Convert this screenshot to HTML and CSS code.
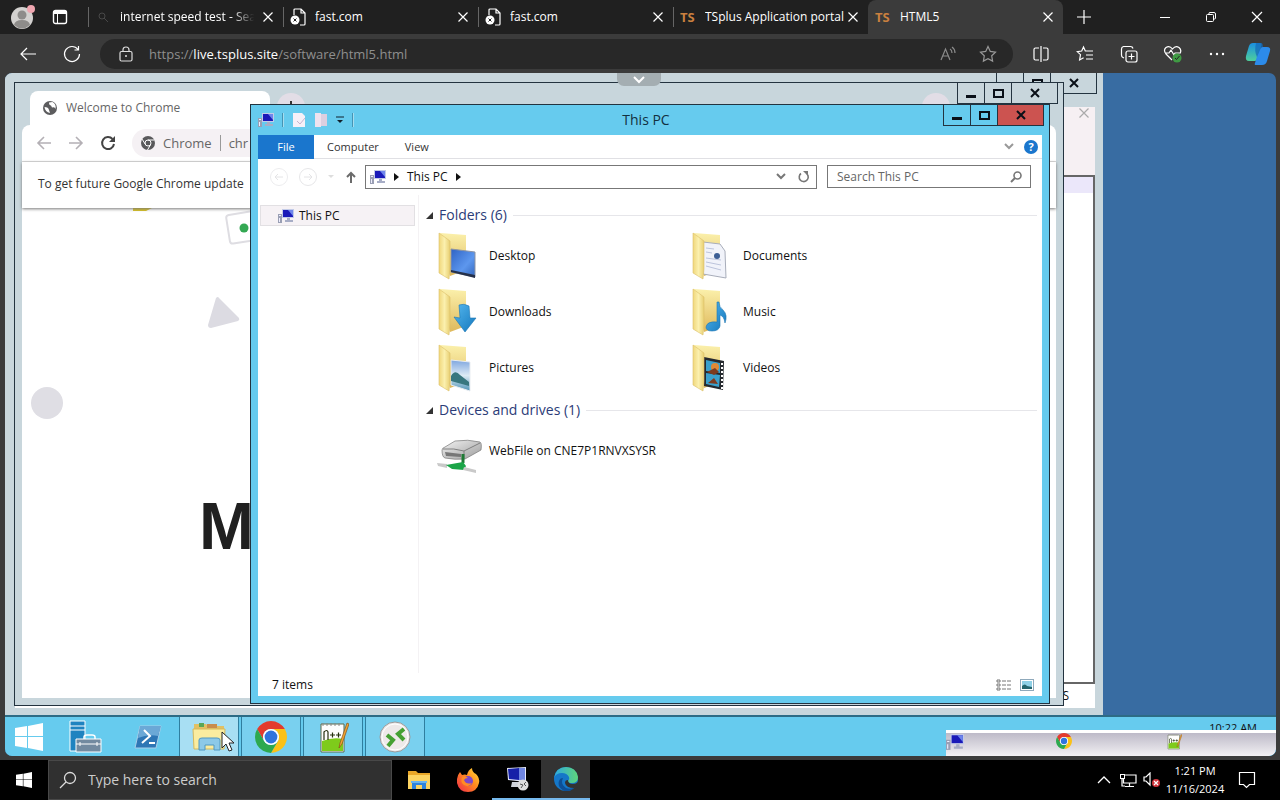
FILE: index.html
```
<!DOCTYPE html>
<html lang="en">
  <head>
    <meta charset="UTF-8" />
    <title>HTML5</title>
    <link rel="stylesheet" href="styles.css">
  </head>
  <body>
    <!-- shared icons -->
    <svg class="defs" aria-hidden="true">
      <defs>
        <linearGradient id="gFlap" x1="0" y1="0" x2="1" y2="0"><stop offset="0" stop-color="#f0d77b"/><stop offset=".5" stop-color="#fbf0ae"/><stop offset="1" stop-color="#e8cf72"/></linearGradient>
        <linearGradient id="gBack" x1="0" y1="0" x2="0" y2="1"><stop offset="0" stop-color="#fbf0ab"/><stop offset="1" stop-color="#dfb95c"/></linearGradient>
        <linearGradient id="gBlue" x1="0" y1="0" x2="1" y2="1"><stop offset="0" stop-color="#2f63c4"/><stop offset=".6" stop-color="#5d97ee"/><stop offset="1" stop-color="#3467bd"/></linearGradient>
        <linearGradient id="gArrow" x1="0" y1="0" x2="1" y2="1"><stop offset="0" stop-color="#55b7ee"/><stop offset="1" stop-color="#1377bd"/></linearGradient>
        <linearGradient id="gSky" x1="0" y1="0" x2="0" y2="1"><stop offset="0" stop-color="#7fa6df"/><stop offset=".5" stop-color="#dcebf5"/><stop offset="1" stop-color="#4f93b5"/></linearGradient>
        <linearGradient id="gGrey" x1="0" y1="0" x2="1" y2="1"><stop offset="0" stop-color="#f4f4f4"/><stop offset="1" stop-color="#9b9b9b"/></linearGradient>
        <linearGradient id="gEdge" x1="0" y1="0" x2="1" y2="0"><stop offset="0" stop-color="#2da8e0"/><stop offset="1" stop-color="#5fd67a"/></linearGradient>
        <linearGradient id="gFox" x1="1" y1="0" x2="0" y2="1"><stop offset="0" stop-color="#ffe03a"/><stop offset=".45" stop-color="#ff8a1f"/><stop offset="1" stop-color="#f0274c"/></linearGradient>
        <linearGradient id="gCop" x1="0" y1="0" x2="0" y2="1"><stop offset="0" stop-color="#1b8fe0"/><stop offset="1" stop-color="#4fd09b"/></linearGradient>
      </defs>
      <symbol id="x" viewBox="0 0 16 16"><path d="M3.500 3.500l9 9M12.500 3.500l-9 9" fill="none" stroke="currentColor" stroke-width="1.200"/></symbol>
      <symbol id="folder" viewBox="0 0 48 48">
        <path d="M3 1L29 3V38L13 44z" fill="url(#gBack)"/>
      </symbol>
      <symbol id="flap" viewBox="0 0 48 48">
        <path d="M2 1l11 8v28l-1 10-10-6z" fill="url(#gFlap)" stroke="#dcc069" stroke-width=".6"/>
      </symbol>
      <symbol id="pc" viewBox="0 0 16 16">
        <path d="M4 1h12v9H4z" fill="#c3cbe8"/><path d="M5 2h10v7H5z" fill="#1a1ab8"/><path d="M10 2h5v6z" fill="#6f86ec"/>
        <path d="M9 10h3v2h3v2H7v-2h2z" fill="#a7adc6"/><path d="M0 6h4v9H0z" fill="#9a9fb4"/><path d="M1 7h2v1H1zM1 10h1v4H1z" fill="#eef"/>
      </symbol>
      <symbol id="chrome" viewBox="4 4 40 40">
        <path fill="#e33b2e" d="M6.68 14A20 20 0 0 1 41.32 14H24A10 10 0 0 0 15.34 29z"/>
        <path fill="#fbc116" d="M41.32 14A20 20 0 0 1 24 44L32.66 29A10 10 0 0 0 24 14z"/>
        <path fill="#2da94f" d="M24 44A20 20 0 0 1 6.68 14L15.34 29A10 10 0 0 0 32.66 29z"/>
        <circle cx="24" cy="24" r="10" fill="#fff"/><circle cx="24" cy="24" r="8" fill="#2f74dd"/>
      </symbol>
      <symbol id="npp" viewBox="0 0 32 32">
        <path d="M4 3h23v28H4z" fill="#fdfdfd" stroke="#5d6a4a"/><path d="M5 20q11-4 21-2v12H5z" fill="#7ecb1b"/>
        <path d="M6 2v3M10 2v3M14 2v3M18 2v3M22 2v3" stroke="#888"/>
        <path d="M7 19v-8q3-3 4 0v8M13 14h5M15.500 11.500v5M19 14h5M21.500 11.500v5" fill="none" stroke="#25300e" stroke-width="1.200"/>
        <path d="M22 27l1-5L30 2l2 1-7 20z" fill="#f1a431" stroke="#865018" stroke-width=".7"/>
      </symbol>
      <symbol id="explorer" viewBox="0 0 24 24">
        <path d="M1 3h8l2 2h12v4H1z" fill="#e9a728"/><path d="M1 7h22v14H1z" fill="#fcd462"/>
        <path d="M5 21v-6q0-2 2-2h10q2 0 2 2v6h-4v-4H9v4z" fill="#2f83dc"/><path d="M4 13h16v2H4z" fill="#68b3ef"/>
      </symbol>
      <symbol id="winlogo" viewBox="0 0 28 28"><path d="M0 5l12-2v10H0zM13 3l15-3v13H13zM0 14h12v11L0 23zM13 14h15v14l-15-3z" fill="#fff"/></symbol>
      <symbol id="badpage" viewBox="0 0 16 18">
        <path d="M4 7V2q0-1 1-1h6l4 4v11q0 1-1 1h-4M11 1v4h4" fill="none" stroke="#fff" stroke-width="1.200"/>
        <circle cx="5" cy="12" r="4.500" fill="#fff"/><path d="M3.500 10.500l3 3M6.500 10.500l-3 3" stroke="#222"/>
      </symbol>
    </svg>

    <!-- browser tabs -->
    <header class="tabstrip">
      <button class="avatar" aria-label="Profile">
        <svg width="26" height="26" viewBox="0 0 26 26"><circle cx="12" cy="14" r="11" fill="#d3d1cf"/><circle cx="12" cy="11" r="4.500" fill="#8e8c8a"/><path d="M4 21q1-5 8-5t8 5q-8 7-16 0z" fill="#8e8c8a"/><circle cx="21" cy="5" r="4" fill="#f0a6b0"/></svg>
      </button>
      <button class="workspaces" aria-label="Workspaces">
        <svg width="16" height="16" viewBox="0 0 16 16"><rect x="1.500" y="1.500" width="13" height="13" rx="2" fill="none" stroke="#fff" stroke-width="1.400"/><path d="M2 2h12v3H2zM5 5h1v9H5z" fill="#fff"/></svg>
      </button>
      <nav class="tabs">
        <div class="tab">
          <svg width="16" height="16" viewBox="0 0 16 16"><circle cx="7" cy="7" r="3" fill="none" stroke="#484848"/><path d="M9 9l4 4" stroke="#484848"/></svg>
          <a class="tab-title fade" href="#">internet speed test - Sear</a>
          <button aria-label="Close tab"><svg width="16" height="16"><use href="#x"/></svg></button>
        </div>
        <div class="tab">
          <svg width="16" height="18"><use href="#badpage"/></svg>
          <a class="tab-title" href="#">fast.com</a>
          <button aria-label="Close tab"><svg width="16" height="16"><use href="#x"/></svg></button>
        </div>
        <div class="tab">
          <svg width="16" height="18"><use href="#badpage"/></svg>
          <a class="tab-title" href="#">fast.com</a>
          <button aria-label="Close tab"><svg width="16" height="16"><use href="#x"/></svg></button>
        </div>
        <div class="tab">
          <span class="ts">TS</span>
          <a class="tab-title" href="#">TSplus Application portal</a>
          <button aria-label="Close tab"><svg width="16" height="16"><use href="#x"/></svg></button>
        </div>
        <div class="tab active">
          <span class="ts">TS</span>
          <a class="tab-title" href="#">HTML5</a>
          <button aria-label="Close tab"><svg width="16" height="16"><use href="#x"/></svg></button>
        </div>
      </nav>
      <button class="new-tab" aria-label="New tab"><svg width="16" height="16" viewBox="0 0 16 16"><path d="M8 1v14M1 8h14" stroke="#fff" stroke-width="1.200"/></svg></button>
      <div class="win-controls">
        <button aria-label="Minimize"><svg width="12" height="12"><path d="M1 6.500h10" stroke="#fff"/></svg></button>
        <button aria-label="Restore"><svg width="12" height="12" viewBox="0 0 12 12"><rect x="1.500" y="3.500" width="7" height="7" rx="1" fill="none" stroke="#fff"/><path d="M4 3V2q0-.500 1-.500h4q1.500 0 1.500 1.500v4q0 1-1 1H9" fill="none" stroke="#fff"/></svg></button>
        <button aria-label="Close"><svg width="12" height="12"><path d="M1 1l10 10M11 1L1 11" stroke="#fff" stroke-width="1.200"/></svg></button>
      </div>
    </header>

    <div class="toolbar">
      <button aria-label="Back"><svg width="18" height="16" viewBox="0 0 18 16"><path d="M17 8H2M8 2L2 8l6 6" fill="none" stroke="#fff" stroke-width="1.200"/></svg></button>
      <button aria-label="Refresh"><svg width="18" height="18" viewBox="0 0 18 18"><path d="M15 4.500A7.500 7.500 0 1 0 16.500 9M15.500 1v4h-4" fill="none" stroke="#fff" stroke-width="1.200"/></svg></button>
      <div class="urlbar">
        <svg width="14" height="16" viewBox="0 0 14 16"><rect x="1" y="5.500" width="12" height="9.500" rx="1.500" fill="none" stroke="#ddd" stroke-width="1.200"/><path d="M4 5V4q0-3 3-3t3 3v1" fill="none" stroke="#ddd" stroke-width="1.200"/><circle cx="7" cy="10" r="1" fill="#ddd"/></svg>
        <div class="url" role="textbox" contenteditable="true" aria-label="Address">https://<b>live.tsplus.site</b>/software/html5.html</div>
        <button aria-label="Read aloud"><svg width="18" height="16" viewBox="0 0 18 16"><path d="M2 14L6.500 3 11 14M3.500 10h6M11 3q2 1 2 4M13 1q3 2 3 6" fill="none" stroke="#8b8b8b" stroke-width="1.200"/></svg></button>
        <button aria-label="Add to favorites"><svg width="18" height="18" viewBox="0 0 18 18"><path d="M9 1.500l2.300 4.900 5.200.700-3.800 3.700.900 5.300L9 13.600l-4.600 2.500.900-5.300L1.500 7.100l5.200-.700z" fill="none" stroke="#999" stroke-width="1.200"/></svg></button>
      </div>
      <button aria-label="Split screen"><svg width="18" height="18" viewBox="0 0 18 18"><path d="M7 3H3.500Q2 3 2 4.500v9Q2 15 3.500 15H7M11 3h3.500Q16 3 16 4.500v9q0 1.500-1.500 1.500H11M9 1v16" fill="none" stroke="#fff" stroke-width="1.200"/></svg></button>
      <button aria-label="Favorites"><svg width="18" height="18" viewBox="0 0 18 18"><path d="M11 6l-1.700 0L7.500 2 5.700 6l-4.500.600 3.300 3-.900 5.400 4-2.200M11 6h6M10 10h7M10 14h7" fill="none" stroke="#fff" stroke-width="1.200"/></svg></button>
      <button aria-label="Collections"><svg width="18" height="18" viewBox="0 0 18 18"><rect x="6" y="6" width="11" height="11" rx="2" fill="none" stroke="#fff" stroke-width="1.200"/><path d="M4 13l-1-.500Q1.500 12 1.500 10V4q0-2 2-2.500h7q2 0 2.500 2M11.500 8.500v6M8.500 11.500h6" fill="none" stroke="#fff" stroke-width="1.200"/></svg></button>
      <button aria-label="Browser essentials"><svg width="20" height="18" viewBox="0 0 20 18"><path d="M9 15L3 9Q0 5 3 2.500 6.500 0 9.500 4 12.500 0 16 2.500q3 2.500 1 6M2 8h4l2-3 3 5 1-2h5" fill="none" stroke="#fff" stroke-width="1.200"/><circle cx="14" cy="13" r="4.500" fill="#3f9a43"/><path d="M12 13l1.500 1.500L16.500 11" fill="none" stroke="#222"/></svg></button>
      <button aria-label="More"><svg width="16" height="4"><circle cx="2" cy="2" r="1.200" fill="#fff"/><circle cx="8" cy="2" r="1.200" fill="#fff"/><circle cx="14" cy="2" r="1.200" fill="#fff"/></svg></button>
      <button class="copilot" aria-label="Copilot"><svg width="26" height="26" viewBox="0 0 26 26"><path d="M8 2h7q2 0 1.500 2l-3 12q-1 4-4 4H4q-4 0-3-5L4 5q1-3 4-3z" fill="url(#gCop)"/><path d="M17 6h5q4 0 3 4l-3 10q-1 4-5 4h-6q-2 0-1-2l4-13q1-3 3-3z" fill="#2c8bea"/><path d="M11 2h5q2 0 2 4-2 0-3 3l-3 7q-3-6-1-14z" fill="#1267b8" opacity=".7"/></svg></button>
    </div>

    <!-- remote session -->
    <main class="remote">
      <div class="desktop">
        <section class="window notepad">
          <div class="caption">
            <button aria-label="Minimize">&nbsp;</button>
            <button aria-label="Maximize"><svg width="11" height="9"><rect x="1" y="1" width="9" height="7" fill="none" stroke="#0a1018" stroke-width="2"/></svg></button>
            <button class="wide" aria-label="Close"><svg width="10" height="10"><path d="M1 1l8 8M9 1L1 9" stroke="#0a1018" stroke-width="2"/></svg></button>
          </div>
          <div class="notepad-body">
            <div class="notepad-bar"><button aria-label="Close document"><svg width="16" height="16"><use href="#x"/></svg></button></div>
            <div class="notepad-text"><div class="current-line"></div></div>
            <div class="notepad-status"><span>INS</span></div>
          </div>
        </section>

        <section class="window chrome">
          <div class="caption">
            <button aria-label="Minimize"><svg width="10" height="9"><path d="M0 7.500h10" stroke="#0a1018" stroke-width="3"/></svg></button>
            <button aria-label="Maximize"><svg width="11" height="9"><rect x="1" y="1" width="9" height="7" fill="none" stroke="#0a1018" stroke-width="2"/></svg></button>
            <button class="wide" aria-label="Close"><svg width="10" height="10"><path d="M1 1l8 8M9 1L1 9" stroke="#0a1018" stroke-width="2"/></svg></button>
          </div>
          <div class="chrome-tabs">
            <div class="chrome-tab">
              <svg width="14" height="14" viewBox="0 0 14 14"><circle cx="7" cy="7" r="7" fill="#5c5c5e"/><path d="M1.500 6q4 0 4.500 3l1 3Q2 11 1.500 6zM6 1.500q0 3 2 3l1 2q3-1 3.500 1.500 1-5-3-7z" fill="#fff"/></svg>
              <a href="#">Welcome to Chrome</a>
            </div>
            <button class="chrome-new" aria-label="New tab"><svg width="12" height="12"><path d="M6 0v12M0 6h12" stroke="#333" stroke-width="2"/></svg></button>
            <span class="chrome-account"></span>
          </div>
          <div class="chrome-bar">
            <button aria-label="Back"><svg width="16" height="14"><path d="M15 7H2M8 1L2 7l6 6" fill="none" stroke="#b4b0b5" stroke-width="1.600"/></svg></button>
            <button aria-label="Forward"><svg width="16" height="14"><path d="M1 7h13M8 1l6 6-6 6" fill="none" stroke="#b4b0b5" stroke-width="1.600"/></svg></button>
            <button aria-label="Reload"><svg width="16" height="16" viewBox="0 0 16 16"><path d="M12.500 4A6 6 0 1 0 14 9" fill="none" stroke="#444" stroke-width="2"/><path d="M15 1v6H9z" fill="#444"/></svg></button>
            <div class="chrome-url">
              <svg width="14" height="14" viewBox="0 0 14 14"><circle cx="7" cy="7" r="7" fill="#59595b"/><circle cx="7" cy="7" r="3" fill="#59595b" stroke="#fff"/><path d="M7 4h6.500M4.400 8.500L1.200 3.200M9.600 8.500L6.500 14" stroke="#fff"/></svg>
              <span>Chrome</span><i></i><span>chr</span>
            </div>
          </div>
          <div class="infobar">To get future Google Chrome update</div>
          <div class="welcome">
            <svg class="shapes" width="240" height="230" viewBox="0 0 240 230" aria-hidden="true">
              <path d="M111 0h19l-6 3h-13z" fill="#d9c21f"/>
              <rect x="206" y="5" width="44" height="29" rx="3" fill="#fff" stroke="#dedde2" stroke-width="2" transform="rotate(-9 220 20)"/>
              <circle cx="222" cy="20" r="4.500" fill="#34a853"/>
              <path d="M194 90q2-2 3 0l20 20q1 2-1 3l-27 7q-3 0-3-3z" fill="#dcdbe2"/>
              <circle cx="25" cy="195" r="16" fill="#dfdee4"/>
            </svg>
            <h1>M</h1>
          </div>
        </section>

        <section class="window files">
          <div class="caption">
            <button aria-label="Minimize"><svg width="10" height="9"><path d="M0 7.500h10" stroke="#0a1018" stroke-width="3"/></svg></button>
            <button aria-label="Maximize"><svg width="11" height="9"><rect x="1" y="1" width="9" height="7" fill="none" stroke="#0a1018" stroke-width="2"/></svg></button>
            <button class="wide red" aria-label="Close"><svg width="10" height="10"><path d="M1 1l8 8M9 1L1 9" stroke="#0a1018" stroke-width="2"/></svg></button>
          </div>
          <div class="files-title">
            <div class="quick">
              <svg width="16" height="16"><use href="#pc"/></svg>
              <i></i>
              <button aria-label="Properties"><svg width="14" height="16" viewBox="0 0 14 16"><path d="M1 1h9l3 3v11H1z" fill="#f6f0f8"/><path d="M5 9l3 3 5-6" fill="none" stroke="#c6b4cf"/></svg></button>
              <button aria-label="New folder"><svg width="14" height="16" viewBox="0 0 14 16"><path d="M1 1h6v14H1z" fill="#efe2ee"/><path d="M7 2h6v12H7z" fill="#dccfe0"/></svg></button>
              <button aria-label="Customize"><svg width="8" height="8"><path d="M0 1h8" stroke="#10202c"/><path d="M1 4h6L4 7z" fill="#10202c"/></svg></button>
              <i></i>
            </div>
            <h2>This PC</h2>
          </div>
          <div class="files-body">
            <div class="ribbon">
              <button class="file">File</button>
              <button>Computer</button>
              <button>View</button>
              <span class="grow"></span>
              <svg width="10" height="8"><path d="M1 1l4 4 4-4" fill="none" stroke="#999" stroke-width="2"/></svg>
              <button class="help" aria-label="Help">?</button>
            </div>
            <div class="navrow">
              <div class="history">
                <svg width="18" height="18"><circle cx="9" cy="9" r="8.500" fill="none" stroke="#ececee"/><path d="M13 9H5M8 6L5 9l3 3" fill="none" stroke="#e4e4e6"/></svg>
                <svg width="18" height="18"><circle cx="9" cy="9" r="8.500" fill="none" stroke="#e6e6e8"/><path d="M5 9h8M10 6l3 3-3 3" fill="none" stroke="#e4e4e6"/></svg>
                <svg width="6" height="4"><path d="M0 0h6L3 3z" fill="#ddd"/></svg>
                <button aria-label="Up"><svg width="10" height="12"><path d="M5 12V2M1 6l4-4 4 4" fill="none" stroke="#6b6b6b" stroke-width="2"/></svg></button>
              </div>
              <div class="address">
                <svg width="16" height="16"><use href="#pc"/></svg>
                <svg width="5" height="8"><path d="M0 0l5 4-5 4z" fill="#111"/></svg>
                <button>This PC</button>
                <svg width="5" height="8"><path d="M0 0l5 4-5 4z" fill="#111"/></svg>
                <span class="grow"></span>
                <svg width="10" height="8"><path d="M1 1l4 4 4-4" fill="none" stroke="#777" stroke-width="2"/></svg>
                <button aria-label="Refresh"><svg width="12" height="12"><path d="M3 2.500A4.500 4.500 0 1 0 9 3" fill="none" stroke="#777" stroke-width="1.600"/><path d="M5 0h5v5z" fill="#777"/></svg></button>
              </div>
              <label class="pc-search">
                <input type="text" placeholder="Search This PC" aria-label="Search This PC">
                <svg width="12" height="12"><circle cx="7.500" cy="4.500" r="3.500" fill="none" stroke="#777" stroke-width="1.600"/><path d="M5 7l-4 4" stroke="#777" stroke-width="2"/></svg>
              </label>
            </div>
            <div class="panes">
              <aside><a class="node" href="#"><svg width="16" height="16"><use href="#pc"/></svg>This PC</a></aside>
              <div class="listing">
                <h3><svg width="7" height="7"><path d="M7 0v7H0z" fill="#333"/></svg>Folders (6)</h3>
                <div class="items">
                  <a href="#"><svg width="48" height="48" viewBox="0 0 48 48"><use href="#folder"/><path d="M14 17l24 3v25l-24-5z" fill="url(#gBlue)" stroke="#8d94a3"/><path d="M14 38l24 5v3l-24-6z" fill="#26314a"/><use href="#flap"/></svg>Desktop</a>
                  <a href="#"><svg width="48" height="48" viewBox="0 0 48 48"><use href="#folder"/><path d="M12 10l17 2 5 7 1 27-23-4z" fill="#f1f3fa" stroke="#a8adba"/><path d="M15 16l8 1M15 20l6 1M15 26l15 2M15 30l15 3M15 34l15 4" stroke="#bcc4dc"/><circle cx="26" cy="24" r="3" fill="#3d5f95"/><use href="#flap"/></svg>Documents</a>
                  <a href="#"><svg width="48" height="48" viewBox="0 0 48 48"><use href="#folder"/><use href="#flap"/><path d="M22 17q5-2 10 1l1 12h6L28 44 17 29l6 1z" fill="url(#gArrow)" stroke="#1b76b3" stroke-width=".6"/></svg>Downloads</a>
                  <a href="#"><svg width="48" height="48" viewBox="0 0 48 48"><use href="#folder"/><use href="#flap"/><path d="M26 14h2q0 5 4 8 5 5 2 13-1-7-5-8v11q-1 5-8 5-6 0-6-4 1-6 11-5z" fill="url(#gArrow)" stroke="#1b76b3" stroke-width=".6"/></svg>Music</a>
                  <a href="#"><svg width="48" height="48" viewBox="0 0 48 48"><use href="#folder"/><path d="M14 16l19 2v29l-19-6z" fill="url(#gSky)" stroke="#e9edf2"/><path d="M14 32q4-7 9-1l9 7v4l-18-5z" fill="#38777f"/><use href="#flap"/></svg>Pictures</a>
                  <a href="#"><svg width="48" height="48" viewBox="0 0 48 48"><use href="#folder"/><path d="M13 13l20 4-1 29-19-4z" fill="#25292e"/><path d="M15 16l14 3v10l-14-2zM15 29l14 2-1 12-13-3z" fill="#3aa0cc"/><circle cx="24" cy="23" r="4" fill="#e08a36"/><path d="M16 28l8-4 4 4-5 3zM17 39l6-5 4 6z" fill="#7d3b1e"/><path d="M31 19v26" stroke="#fff" stroke-width="2" stroke-dasharray="2 2"/><use href="#flap"/></svg>Videos</a>
                </div>
                <h3><svg width="7" height="7"><path d="M7 0v7H0z" fill="#333"/></svg>Devices and drives (1)</h3>
                <div class="items drives">
                  <a href="#"><svg width="48" height="48" viewBox="0 0 48 48"><path d="M5 17q0-2 3-3l10-6q13-2 25 1 2 1 1 8L28 26q-10 1-20-1-3-1-3-8z" fill="url(#gGrey)" stroke="#777" stroke-width=".7"/><path d="M6 16q11-1 21 2L43 10M27 18v8" fill="none" stroke="#808080"/><path d="M8 19l16 2v3l-15-1z" fill="#777"/><path d="M26 21v9" stroke="#1f7a35" stroke-width="3"/><path d="M0 30l10 1v4L1 33z" fill="#c9c9c9"/><path d="M9 32l17-3 3 4-2 4-12-1z" fill="#1ba548"/><path d="M27 34l12 3v3l-13-3z" fill="#c9c9c9"/></svg><span>WebFile on CNE7P1RNVXSYSR</span></a>
                </div>
              </div>
            </div>
            <footer class="files-status">
              <span>7 items</span>
              <button aria-label="Details view"><svg width="16" height="12"><path d="M1 1h3v2H1zM1 5h3v2H1zM1 9h3v2H1z" fill="none" stroke="#777"/><path d="M6 2h10M6 6h10M6 10h10" stroke="#777" stroke-dasharray="4 1"/></svg></button>
              <button aria-label="Large icons"><svg width="14" height="12"><rect x=".500" y=".500" width="13" height="11" fill="#fff" stroke="#8fa9bb"/><path d="M2 2h10v8H2z" fill="#8fd0e6"/><path d="M2 7q3-3 5 0l5 1v2H2z" fill="#24656d"/></svg></button>
            </footer>
          </div>
        </section>
      </div>

      <nav class="server-bar">
        <button class="server-start" aria-label="Start"><svg width="28" height="28"><use href="#winlogo"/></svg></button>
        <button aria-label="Server Manager"><svg width="34" height="34" viewBox="0 0 34 34"><path d="M2 1h15v30H2z" fill="#1f83c0" stroke="#fff"/><path d="M2 6h15M2 10h15" stroke="#fff"/><path d="M13 14V12q0-2 3-2h5q3 0 3 2v2" transform="translate(3 5)" fill="none" stroke="#fff" stroke-width="1.500"/><path d="M8 19h25v13H8z" fill="#728aa0" stroke="#fff"/><path d="M8 24h25M12 22v4M29 22v4" stroke="#fff"/></svg></button>
        <button aria-label="PowerShell"><svg width="28" height="24" viewBox="0 0 28 24"><path d="M6 1h21l-5 22H1z" fill="#2e76b5" stroke="#a8cfe9"/><path d="M6 1h21l-3 10q-10-2-20 2z" fill="#6ba8d6"/><path d="M10 5l6 6-8 7M15 18h6" fill="none" stroke="#fff" stroke-width="2"/></svg></button>
        <button class="open current" aria-label="File Explorer"><svg width="34" height="32" viewBox="0 0 34 32"><path d="M2 3h12l2 2h16v22H2z" fill="#e2c063"/><path d="M7 2h5v4H7z" fill="#59a757"/><path d="M15 3h10v4H15z" fill="#c98c4b"/><path d="M1 8h32l-1 20H2z" fill="#faec9f" stroke="#d5b95d"/><path d="M7 29V19q0-2 3-2h15q3 0 3 2v10h-6v-5h-9v5z" fill="#8cc9e8" stroke="#5198c1"/></svg></button>
        <button class="open" aria-label="Google Chrome"><svg width="32" height="32"><use href="#chrome"/></svg></button>
        <button class="open" aria-label="Notepad++"><svg width="32" height="34"><use href="#npp"/></svg></button>
        <button class="open" aria-label="Remote Desktop"><svg width="32" height="32" viewBox="0 0 32 32"><circle cx="16" cy="16" r="15" fill="#eee9e9" stroke="#9a9a9a"/><circle cx="16" cy="16" r="13" fill="none" stroke="#fff"/><path d="M8 14l6 5-5 6M25 8l-6 5 6 6" fill="none" stroke="#45a032" stroke-width="4"/></svg></button>
        <span class="server-clock">10:22 AM</span>
      </nav>

      <div class="session-bar">
        <button aria-label="This PC"><svg width="18" height="18"><use href="#pc"/></svg></button>
        <button aria-label="Google Chrome"><svg width="16" height="16"><use href="#chrome"/></svg></button>
        <button aria-label="Notepad++"><svg width="16" height="17"><use href="#npp"/></svg></button>
      </div>
      <button class="pull" aria-label="Show menu"><svg width="12" height="8"><path d="M1 1l5 5 5-5" fill="none" stroke="#fff" stroke-width="2"/></svg></button>
      <svg class="cursor" width="14" height="22" viewBox="0 0 14 22" aria-hidden="true"><path d="M1 1v16l4-4 3 7 3-1-3-7h5z" fill="#fff" stroke="#222"/></svg>
    </main>

    <!-- local taskbar -->
    <footer class="taskbar">
      <button class="start" aria-label="Start"><svg width="16" height="16"><use href="#winlogo"/></svg></button>
      <label class="search">
        <svg width="18" height="18"><circle cx="11" cy="7" r="5.500" fill="none" stroke="#ddd" stroke-width="1.300"/><path d="M7 11l-6 6" stroke="#ddd" stroke-width="1.300"/></svg>
        <input type="text" placeholder="Type here to search" aria-label="Type here to search">
      </label>
      <button class="app" aria-label="File Explorer"><svg width="24" height="24"><use href="#explorer"/></svg></button>
      <button class="app" aria-label="Firefox"><svg width="24" height="24" viewBox="0 0 24 24"><path d="M1 11Q2 6 4 4l2 3q3-1 5 0Q12 2 16 0q0 4 4 6 4 4 3 9-2 9-11 9T1 15z" fill="url(#gFox)"/><circle cx="12" cy="13" r="5" fill="#7b47c9"/><path d="M6 9q3-2 6 1-3 0-4 2 2 5 8 3-3 5-8 2-4-3-2-8z" fill="#ff8b24"/></svg></button>
      <button class="app running" aria-label="Remote Desktop Connection"><svg width="24" height="26" viewBox="0 0 24 26"><path d="M2 2l19-1v15L3 14z" fill="#e5e9f8"/><path d="M3 3l11-1v12L4 13z" fill="#1620a8"/><path d="M14 2l6 0v13l-6-1z" fill="#6f86e2"/><path d="M7 16h8l2 5H6z" fill="#cfd3da"/><circle cx="18" cy="19" r="5.500" fill="#dedede"/><path d="M15 18l3 1-2 3M21 16l-2 2 2 2" fill="none" stroke="#555"/></svg></button>
      <button class="app running selected" aria-label="Microsoft Edge"><svg width="24" height="24" viewBox="0 0 24 24"><circle cx="12" cy="12" r="12" fill="#1577c8"/><path d="M0 11Q2 0 12 0t12 10q0 6-6 6-4 0-4-2 2-2 1-4Q13 6 8 6 2 6 0 11z" fill="url(#gEdge)"/><path d="M9 11q-3 6 3 10 5 2 9-1-4 5-11 4-7-4-5-10 1-3 4-3z" fill="#0d4f96"/><path d="M14 13q0 4 5 4 3 0 5-2v5l-4 1q-8 0-9-5 0-3 3-3z" fill="#333"/></svg></button>
      <span class="grow"></span>
      <button class="tray" aria-label="Show hidden icons"><svg width="14" height="8"><path d="M1 7l6-6 6 6" fill="none" stroke="#fff" stroke-width="1.300"/></svg></button>
      <button class="tray" aria-label="Network"><svg width="18" height="16" viewBox="0 0 18 16"><path d="M6 3h11v8H4.500V7M10.500 11v3M6 14.500h9M3 7v7h3" fill="none" stroke="#fff" stroke-width="1.200"/><rect x="1.500" y="2.500" width="4" height="4" fill="none" stroke="#fff"/></svg></button>
      <button class="tray" aria-label="Volume"><svg width="18" height="16" viewBox="0 0 18 16"><path d="M1 5h2l4-4v12L3 9H1z" fill="none" stroke="#fff" stroke-width="1.200"/><circle cx="13" cy="11" r="4" fill="#d3353c"/><path d="M11 9l4 4M15 9l-4 4" stroke="#fff" stroke-width="1.200"/></svg></button>
      <button class="clock">1:21 PM<br>11/16/2024</button>
      <button class="notices" aria-label="Notifications"><svg width="18" height="18"><path d="M1.500 1.500h15v12h-5l-3 3-3-3h-4z" fill="none" stroke="#fff" stroke-width="1.200"/></svg></button>
    </footer>
  </body>
</html>
```
FILE: styles.css
```
* {
    box-sizing: border-box;
}

body {
    margin: 0;
    height: 100vh;
    display: flex;
    flex-direction: column;
    overflow: hidden;
    background-color: #3b3b3b;
    font-family: "Open Sans", "Noto Sans", sans-serif;
    font-size: 12px;
    line-height: 16px;
    color: #111;
}

button, input {
    margin: 0;
    padding: 0;
    border: 0;
    background: none;
    font: inherit;
    color: inherit;
}

button {
    display: flex;
    align-items: center;
    justify-content: center;
    flex: none;
}

a {
    color: inherit;
    text-decoration: none;
}

svg {
    display: block;
    flex: none;
}

h1, h2, h3 {
    margin: 0;
    font-weight: normal;
}

.defs {
    position: absolute;
    width: 0;
    height: 0;
}

.grow {
    flex: 1;
}

/* browser */
.tabstrip {
    display: flex;
    height: 34px;
    background-color: #202020;
    color: #fff;
}

.avatar {
    width: 46px;
}

.workspaces {
    width: 28px;
}

.tabs {
    display: flex;
    flex: 0 1 975px;
    min-width: 0;
    margin-left: 14px;
}

.tab {
    flex: 1 1 0;
    min-width: 0;
    display: flex;
    align-items: center;
    padding: 0 7px;
    background: linear-gradient(#666, #666) left center / 1px 20px no-repeat;
}

.tab.active {
    background: #3b3b3b;
    border-radius: 8px 8px 0 0;
}

.tab-title {
    flex: 1;
    overflow: hidden;
    margin-left: 9px;
    white-space: nowrap;
    font-size: 12px;
}

.fade {
    -webkit-mask-image: linear-gradient(90deg, #000 80%, transparent 96%);
    mask-image: linear-gradient(90deg, #000 80%, transparent 96%);
}

.ts {
    width: 16px;
    font-size: 13px;
    font-weight: bold;
    color: #c9803f;
}

.new-tab {
    width: 42px;
}

.win-controls {
    display: flex;
    margin-left: auto;
}

.win-controls button {
    width: 46px;
}

.toolbar {
    display: flex;
    align-items: center;
    height: 39px;
    padding: 0 3px 0 6px;
}

.toolbar > button {
    width: 44px;
    height: 28px;
}

.toolbar > .copilot {
    width: 38px;
}

.urlbar {
    flex: 1;
    display: flex;
    align-items: center;
    gap: 16px;
    height: 30px;
    margin: 0 6px;
    padding: 0 13px 0 19px;
    border-radius: 15px;
    background-color: #282828;
}

.urlbar button {
    width: 24px;
}

.url {
    flex: 1;
    font-size: 13px;
    white-space: nowrap;
    color: #8f8f8f;
}

.url b {
    font-weight: normal;
    color: #fff;
}

/* remote desktop */
.remote {
    position: relative;
    flex: 1;
    display: flex;
    flex-direction: column;
    min-height: 0;
    margin: 0 4px 4px 5px;
    border-radius: 7px;
    overflow: hidden;
    background-color: #386ca2;
}

.desktop {
    position: relative;
    flex: 1;
    overflow: hidden;
}

.window {
    position: absolute;
    isolation: isolate;
    display: flex;
    flex-direction: column;
    border: 1px solid #23333f;
    background-color: #c8d6dc;
}

.caption {
    position: absolute;
    top: -1px;
    right: 5px;
    display: flex;
    border: 1px solid #23333f;
}

.caption button {
    width: 27px;
    height: 20px;
    border-right: 1px solid #23333f;
}

.caption .wide {
    width: 45px;
    border-right: 0;
}

.caption .red {
    background-color: #cc5350;
}

.notepad {
    left: 0;
    top: -8px;
    width: 1098px;
    height: 650px;
    border-color: #c8d6dc;
}

.notepad .caption {
    top: 7px;
    border-top: 0;
}

.notepad-body {
    flex: 1;
    display: flex;
    flex-direction: column;
    margin: 41px 7px 6px 9px;
    background-color: #fff;
}

.notepad-bar {
    display: flex;
    justify-content: flex-end;
    height: 68px;
    padding: 0 3px;
    background-color: #f6f0f3;
    color: #aaa;
}

.notepad-bar button {
    height: 12px;
}

.notepad-text {
    flex: 1;
    border: solid #666;
    border-width: 2px 2px 2px 0;
}

.current-line {
    height: 16px;
    background-color: #ebe7fa;
}

.notepad-status {
    height: 24px;
    padding: 4px 26px;
    text-align: right;
}

.chrome {
    left: 9px;
    top: 9px;
    width: 1050px;
    height: 624px;
    padding: 8px 7px 7px;
}

.chrome-tabs {
    display: flex;
    height: 34px;
    padding-left: 8px;
}

.chrome-tab {
    display: flex;
    align-items: center;
    gap: 9px;
    width: 240px;
    padding: 0 13px;
    border-radius: 8px 8px 0 0;
    background-color: #fff;
    color: #666;
}

.chrome-new {
    width: 28px;
    height: 28px;
    margin: 2px 0 0 7px;
    border-radius: 50%;
    background-color: #e2dde6;
}

.chrome-account {
    width: 28px;
    height: 28px;
    margin: 2px 106px 0 auto;
    border-radius: 50%;
    background-color: #e2dde6;
}

.chrome-bar {
    display: flex;
    align-items: center;
    gap: 16px;
    height: 37px;
    padding: 0 14px;
    border-bottom: 1px solid #ddd;
    border-radius: 8px 8px 0 0;
    background-color: #fff;
}

.chrome-url {
    flex: 1;
    display: flex;
    align-items: center;
    gap: 8px;
    height: 28px;
    padding-left: 9px;
    border-radius: 14px;
    background-color: #f5f1f4;
    font-size: 13px;
    color: #666;
}

.chrome-url i {
    width: 1px;
    height: 16px;
    background-color: #999;
}

.infobar {
    z-index: 1;
    height: 46px;
    padding: 14px 16px;
    background-color: #fff;
    box-shadow: 0 1px 3px #777;
    font-size: 12px;
    white-space: nowrap;
    color: #333;
}

.welcome {
    flex: 1;
    overflow: hidden;
    background-color: #fff;
}

.welcome h1 {
    margin: 48px 0 0 177px;
    font: bold 66px/80px "Liberation Sans", sans-serif;
    white-space: nowrap;
    color: #202020;
}

/* file explorer */
.files {
    left: 245px;
    top: 31px;
    width: 800px;
    height: 600px;
    padding: 0 7px 7px;
    background-color: #66cbee;
}

.files-title {
    display: grid;
    grid-template-columns: 1fr auto 1fr;
    align-items: center;
    height: 30px;
}

.files-title h2 {
    padding-right: 8px;
    font-size: 14px;
    line-height: 20px;
    color: #12303e;
}

.quick {
    display: flex;
    align-items: center;
    gap: 8px;
}

.quick i {
    width: 2px;
    height: 14px;
    background-color: #a5dcee;
    border-left: 1px solid #4494b5;
}

.files-body {
    flex: 1;
    display: flex;
    flex-direction: column;
    background-color: #fff;
}

.ribbon {
    display: flex;
    align-items: center;
    height: 24px;
    padding-right: 4px;
    border-bottom: 1px solid #e0e0e4;
    font-size: 11px;
    color: #333;
}

.ribbon button {
    height: 24px;
    padding: 0 13px;
}

.ribbon .file {
    width: 56px;
    background-color: #1a76cd;
    color: #fff;
}

.ribbon .help {
    width: 14px;
    height: 14px;
    margin-left: 10px;
    padding: 0;
    border-radius: 50%;
    background-color: #1a76cd;
    font-weight: bold;
    color: #fff;
}

.navrow {
    display: flex;
    height: 36px;
    padding: 6px 11px 6px 12px;
}

.history {
    display: flex;
    align-items: center;
    gap: 11px;
    width: 95px;
}

.history button {
    width: 12px;
}

.address {
    flex: 1;
    display: flex;
    align-items: center;
    gap: 8px;
    height: 24px;
    padding: 0 6px 0 4px;
    border: 1px solid #777;
}

.address .grow + svg {
    margin-right: 4px;
}

.pc-search {
    display: flex;
    align-items: center;
    flex: 0 1 204px;
    height: 23px;
    margin-left: 10px;
    padding: 0 8px 0 9px;
    border: 1px solid #777;
}

.pc-search input {
    flex: 1;
    min-width: 0;
    outline: 0;
}

.pc-search input::placeholder {
    color: #666;
    opacity: 1;
}

.panes {
    flex: 1;
    display: flex;
}

aside {
    width: 161px;
    padding: 10px 3px 0 2px;
    border-right: 1px solid #f4f2f4;
}

.node {
    display: flex;
    align-items: center;
    gap: 5px;
    height: 21px;
    padding-left: 17px;
    border: 1px solid #e2e0e3;
    background-color: #f6f2f5;
}

.listing {
    flex: 1;
    padding: 8px 5px 0 7px;
}

.listing h3 {
    display: flex;
    align-items: center;
    gap: 6px;
    height: 24px;
    font-size: 14px;
    line-height: 20px;
    white-space: nowrap;
    color: #2c3c78;
}

.listing h3::after {
    content: "";
    flex: 1;
    height: 1px;
    background-color: #e6e6ea;
}

.items {
    display: grid;
    grid-template-columns: repeat(auto-fill, 254px);
    grid-auto-rows: 56px;
    padding: 1px 0 2px 11px;
}

.items a {
    display: flex;
    align-items: center;
    gap: 4px;
}

.drives {
    padding-top: 7px;
}

.drives span {
    padding-bottom: 12px;
    white-space: nowrap;
}

.files-status {
    display: flex;
    align-items: center;
    gap: 8px;
    height: 23px;
    padding: 0 8px 0 14px;
}

.files-status span {
    flex: 1;
}

/* server taskbar */
.server-bar {
    display: flex;
    align-items: stretch;
    height: 41px;
    border-top: 2px solid #2d6b85;
    background-color: #66cbee;
}

.server-bar button {
    width: 63px;
}

.server-bar .server-start {
    width: 48px;
}

.server-bar .open {
    width: 60px;
    margin-right: 2px;
    border: 1px solid #2f7e9f;
    border-width: 0 1px;
    background-color: #79d0ef;
}

.server-bar .current {
    background-color: #a8dff3;
}

.server-clock {
    margin-left: auto;
    padding: 3px 19px;
    font-size: 11px;
}

.session-bar {
    position: absolute;
    right: 0;
    bottom: 0;
    display: flex;
    width: 330px;
    height: 26px;
    border-top: 3px solid #fff;
    border-radius: 0 0 7px 0;
    background: linear-gradient(#bdbac8, #f2f0f3);
}

.session-bar button {
    flex: 1;
    justify-content: flex-start;
    align-items: flex-start;
}

.pull {
    position: absolute;
    top: 0;
    left: 50%;
    width: 44px;
    height: 13px;
    margin-left: -24px;
    border-radius: 0 0 7px 7px;
    background-color: #a4aeb2;
}

.cursor {
    position: absolute;
    left: 216px;
    bottom: 3px;
}

/* local taskbar */
.taskbar {
    display: flex;
    align-items: stretch;
    height: 40px;
    background-color: #000;
    color: #fff;
}

.start {
    width: 48px;
}

.search {
    display: flex;
    align-items: center;
    flex: 0 1 344px;
    gap: 11px;
    margin-right: 2px;
    padding-left: 10px;
    border: 1px solid #484848;
    background-color: #303030;
}

.search input {
    flex: 1;
    min-width: 0;
    outline: 0;
    font-size: 14px;
}

.search input::placeholder {
    color: #ccc;
    opacity: 1;
}

.app {
    width: 49px;
}

.running {
    border-bottom: 2px solid #76b9ed;
}

.selected {
    background-color: #333;
}

.tray {
    width: 24px;
}

.clock {
    width: 62px;
    font-size: 11px;
    line-height: 18px;
    text-align: center;
}

.notices {
    width: 42px;
    margin-right: 12px;
}
```
